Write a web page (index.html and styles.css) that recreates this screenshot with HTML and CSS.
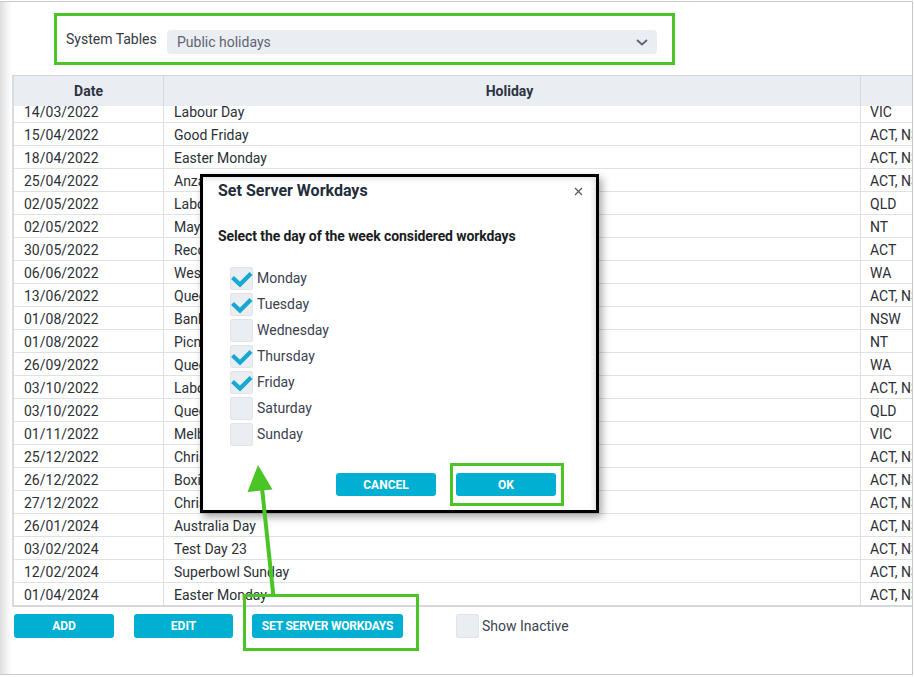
FILE: index.html
```html
<!DOCTYPE html>
<html>
<head>
<meta charset="utf-8">
<link rel="stylesheet" href="styles.css">
</head>
<body>
<div class="panel">
  <div class="filter">
    <div class="filter-label">System Tables</div>
    <div class="select">
      <span>Public holidays</span>
      <svg class="chev" width="12" height="7" viewBox="0 0 12 7"><polyline points="1,1 6,5.5 11,1" fill="none" stroke="#5a6478" stroke-width="1.8"/></svg>
    </div>
  </div>

  <div class="table">
    <div class="thead">
      <div class="th">Date</div>
      <div class="th th-holiday">Holiday</div>
      <div class="th"></div>
    </div>
    <div class="tbody">
      <div class="rows">
        <div class="row"><div class="td">14/03/2022</div><div class="td">Labour Day</div><div class="td c3">VIC</div></div>
        <div class="row"><div class="td">15/04/2022</div><div class="td">Good Friday</div><div class="td c3">ACT, NSW, NT, QLD, SA, TAS, VIC, WA</div></div>
        <div class="row"><div class="td">18/04/2022</div><div class="td">Easter Monday</div><div class="td c3">ACT, NSW, NT, QLD, SA, TAS, VIC, WA</div></div>
        <div class="row"><div class="td">25/04/2022</div><div class="td">Anzac Day</div><div class="td c3">ACT, NSW, NT, QLD, SA, TAS, VIC, WA</div></div>
        <div class="row"><div class="td">02/05/2022</div><div class="td">Labour Day</div><div class="td c3">QLD</div></div>
        <div class="row"><div class="td">02/05/2022</div><div class="td">May Day</div><div class="td c3">NT</div></div>
        <div class="row"><div class="td">30/05/2022</div><div class="td">Reconciliation Day</div><div class="td c3">ACT</div></div>
        <div class="row"><div class="td">06/06/2022</div><div class="td">Western Australia Day</div><div class="td c3">WA</div></div>
        <div class="row"><div class="td">13/06/2022</div><div class="td">Queen's Birthday</div><div class="td c3">ACT, NSW, NT, SA, TAS, VIC</div></div>
        <div class="row"><div class="td">01/08/2022</div><div class="td">Bank Holiday</div><div class="td c3">NSW</div></div>
        <div class="row"><div class="td">01/08/2022</div><div class="td">Picnic Day</div><div class="td c3">NT</div></div>
        <div class="row"><div class="td">26/09/2022</div><div class="td">Queen's Birthday</div><div class="td c3">WA</div></div>
        <div class="row"><div class="td">03/10/2022</div><div class="td">Labour Day</div><div class="td c3">ACT, NSW, SA</div></div>
        <div class="row"><div class="td">03/10/2022</div><div class="td">Queen's Birthday</div><div class="td c3">QLD</div></div>
        <div class="row"><div class="td">01/11/2022</div><div class="td">Melbourne Cup</div><div class="td c3">VIC</div></div>
        <div class="row"><div class="td">25/12/2022</div><div class="td">Christmas Day</div><div class="td c3">ACT, NSW, NT, QLD, SA, TAS, VIC, WA</div></div>
        <div class="row"><div class="td">26/12/2022</div><div class="td">Boxing Day</div><div class="td c3">ACT, NSW, NT, QLD, SA, TAS, VIC, WA</div></div>
        <div class="row"><div class="td">27/12/2022</div><div class="td">Christmas Day Holiday</div><div class="td c3">ACT, NSW, NT, QLD, SA, TAS, VIC, WA</div></div>
        <div class="row"><div class="td">26/01/2024</div><div class="td">Australia Day</div><div class="td c3">ACT, NSW, NT, QLD, SA, TAS, VIC, WA</div></div>
        <div class="row"><div class="td">03/02/2024</div><div class="td">Test Day 23</div><div class="td c3">ACT, NSW, NT, QLD, SA, TAS, VIC, WA</div></div>
        <div class="row"><div class="td">12/02/2024</div><div class="td">Superbowl Sunday</div><div class="td c3">ACT, NSW, NT, QLD, SA, TAS, VIC, WA</div></div>
        <div class="row"><div class="td">01/04/2024</div><div class="td">Easter Monday</div><div class="td c3">ACT, NSW, NT, QLD, SA, TAS, VIC, WA</div></div>
      </div>
    </div>
  </div>

  <div class="actions">
    <div class="btn btn-add">ADD</div>
    <div class="btn btn-edit">EDIT</div>
    <div class="btn btn-ssw">SET SERVER WORKDAYS</div>
    <div class="chk"></div>
    <div class="chk-label">Show Inactive</div>
  </div>

  <div class="dialog">
    <div class="dlg-head">
      <div class="dlg-title">Set Server Workdays</div>
      <svg class="close" width="9" height="9" viewBox="0 0 9 9"><path d="M1 1 L8 8 M8 1 L1 8" stroke="#4d5a68" stroke-width="1.2" fill="none"/></svg>
    </div>
    <div class="dlg-text">Select the day of the week considered workdays</div>
    <div class="days">
      <div class="day"><div class="box"><svg width="23" height="23" viewBox="0 0 23 23"><path d="M2.5 10.5 L10 17.5 L21 6.5" fill="none" stroke="#16a8d0" stroke-width="4.2"/></svg></div><span>Monday</span></div>
      <div class="day"><div class="box"><svg width="23" height="23" viewBox="0 0 23 23"><path d="M2.5 10.5 L10 17.5 L21 6.5" fill="none" stroke="#16a8d0" stroke-width="4.2"/></svg></div><span>Tuesday</span></div>
      <div class="day"><div class="box"></div><span>Wednesday</span></div>
      <div class="day"><div class="box"><svg width="23" height="23" viewBox="0 0 23 23"><path d="M2.5 10.5 L10 17.5 L21 6.5" fill="none" stroke="#16a8d0" stroke-width="4.2"/></svg></div><span>Thursday</span></div>
      <div class="day"><div class="box"><svg width="23" height="23" viewBox="0 0 23 23"><path d="M2.5 10.5 L10 17.5 L21 6.5" fill="none" stroke="#16a8d0" stroke-width="4.2"/></svg></div><span>Friday</span></div>
      <div class="day"><div class="box"></div><span>Saturday</span></div>
      <div class="day"><div class="box"></div><span>Sunday</span></div>
    </div>
    <div class="dlg-actions">
      <div class="btn dlg-btn">CANCEL</div>
      <div class="btn dlg-btn">OK</div>
    </div>
  </div>

  <div class="hl hl-ok"></div>
  <div class="hl hl-ssw"></div>
  <svg class="arrow" width="40" height="150" viewBox="240 455 40 150">
    <line x1="262" y1="488" x2="273.5" y2="597" stroke="#4bc526" stroke-width="4"/>
    <polygon points="258,465 247.5,492 272.5,489.5" fill="#4bc526"/>
  </svg>
</div>
</body>
</html>
```

FILE: styles.css
```css
* { box-sizing: border-box; }

body {
  margin: 0;
  background: #fff;
  font-family: Roboto, "Liberation Sans", sans-serif;
}

.panel {
  position: relative;
  width: 913px;
  height: 674px;
  margin-top: 1px;
  border: 1px solid #c9c9c9;
  border-left: 0;
  background: linear-gradient(to right, #dedede 0, #f1f1f1 6px, #fff 12px);
  overflow: hidden;
}

/* filter bar */
.filter {
  display: flex;
  align-items: flex-start;
  width: 621px;
  height: 52px;
  margin: 11px 0 0 54px;
  padding: 13px 0 0 9px;
  border: 3px solid #4bc526;
}

.filter-label {
  width: 101px;
  font-size: 14px;
  line-height: 20px;
  color: #353a44;
  white-space: nowrap;
}

.select {
  display: flex;
  align-items: center;
  justify-content: space-between;
  width: 490px;
  height: 24px;
  margin-top: 1px;
  padding: 0 9px 0 10px;
  background: #eaeef2;
  border-radius: 4px;
  font-size: 14px;
  color: #5d6374;
}

.chev { display: block; }

/* table */
.table {
  width: 1000px;
  margin: 10px 0 0 12px;
  border-left: 2px solid #d9dcdf;
  border-top: 1px solid #d3d7db;
}

.thead {
  display: grid;
  grid-template-columns: 150px 697px 153px;
  height: 30px;
  background: #eaeef2;
}

.th {
  display: flex;
  align-items: center;
  justify-content: center;
  border-right: 1px solid #d6dadd;
  font-size: 14px;
  font-weight: 700;
  color: #2d3342;
}

.th-holiday { padding-right: 5px; }

.tbody {
  height: 501px;
  overflow: hidden;
  border-bottom: 2px solid #d5d9dd;
}

.rows { margin-top: -6px; }

.row {
  display: grid;
  grid-template-columns: 150px 697px 153px;
  height: 23px;
  border-bottom: 1px solid #dfe2e5;
}

.td {
  padding: 2px 0 0 10px;
  border-right: 1px solid #dfe2e5;
  font-size: 14px;
  line-height: 20px;
  color: #2b3036;
  white-space: nowrap;
  overflow: hidden;
}

.td.c3 { padding-left: 9px; }

/* bottom actions */
.actions {
  display: flex;
  align-items: center;
  height: 24px;
  margin: 7px 0 0 14px;
}

.btn {
  display: flex;
  align-items: center;
  justify-content: center;
  height: 24px;
  background: #00afd2;
  border-radius: 3px;
  color: #fff;
  font-size: 12px;
  font-weight: 700;
  white-space: nowrap;
}

.btn-add { width: 100px; }
.btn-edit { width: 99px; margin-left: 20px; }
.btn-ssw { width: 151px; margin-left: 19px; letter-spacing: -0.2px; }

.chk {
  width: 23px;
  height: 24px;
  margin-left: 53px;
  background: #eaeef2;
  border-radius: 3px;
  box-shadow: inset 0 0 0 1px #e0e4e8;
}

.chk-label {
  margin-left: 3px;
  font-size: 14px;
  color: #3b4150;
}

/* dialog */
.dialog {
  position: absolute;
  left: 200px;
  top: 172px;
  z-index: 2;
  width: 399px;
  height: 339px;
  border: 3px solid #000;
  background: #fff;
  box-shadow: 3px 4px 8px rgba(0, 0, 0, 0.35), inset -2px 2px 5px rgba(0, 0, 0, 0.12);
}

.dlg-head {
  display: flex;
  align-items: center;
  justify-content: space-between;
  height: 20px;
  margin-top: 4px;
  padding: 0 13px 0 15px;
}

.dlg-title {
  font-size: 16px;
  font-weight: 700;
  line-height: 20px;
  color: #1f2d3a;
}

.close { display: block; }

.dlg-text {
  margin: 25px 0 0 15px;
  font-size: 14px;
  font-weight: 700;
  line-height: 20px;
  color: #1a1d22;
  letter-spacing: -0.1px;
}

.days {
  display: flex;
  flex-direction: column;
  gap: 3px;
  margin: 21px 0 0 27px;
}

.day {
  display: flex;
  align-items: center;
  gap: 4px;
  height: 23px;
  font-size: 14px;
  color: #3b4150;
}

.day span {
  line-height: 20px;
  padding-bottom: 2px;
}

.box {
  width: 23px;
  height: 23px;
  background: #eaeef2;
  border-radius: 3px;
  box-shadow: inset 0 0 0 1px #e0e4e8;
}

.box svg { display: block; }

.dlg-actions {
  display: flex;
  justify-content: flex-end;
  gap: 20px;
  margin-top: 27px;
  padding-right: 40px;
}

.dlg-btn {
  width: 100px;
  height: 23px;
}

/* annotations */
.hl {
  position: absolute;
  z-index: 3;
  border: 3px solid #4bc526;
}

.hl-ok { left: 450px; top: 461px; width: 114px; height: 43px; }
.hl-ssw { left: 243px; top: 592px; width: 176px; height: 57px; }

.arrow {
  position: absolute;
  left: 240px;
  top: 453px;
  z-index: 3;
}
```
